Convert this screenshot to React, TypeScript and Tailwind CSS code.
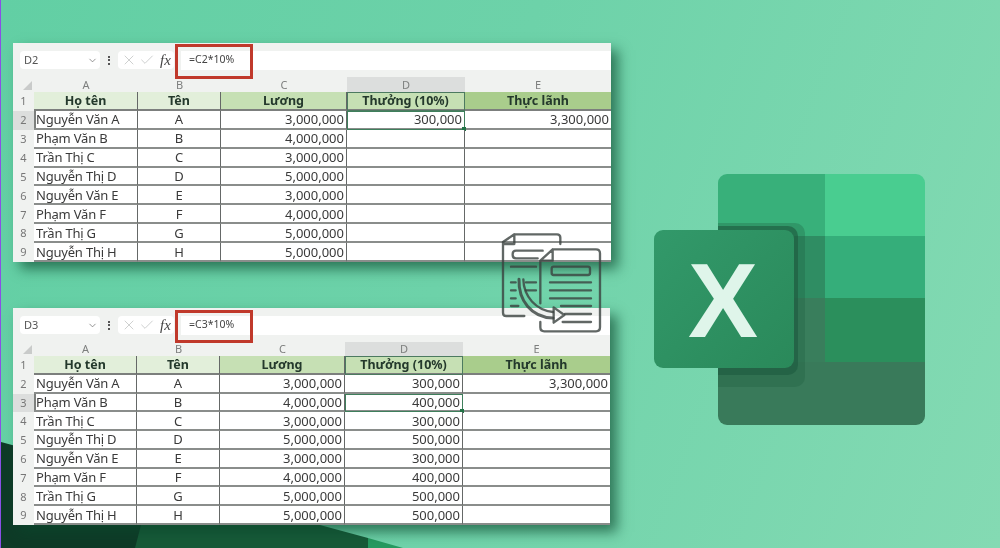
import { Check, ChevronDown, X } from 'lucide-react';

const font = { fontFamily: '"Noto Sans", "Open Sans", sans-serif' };

interface Person {
  hoTen: string;
  ten: string;
  luong: string;
}

const people: Person[] = [
  { hoTen: 'Nguyễn Văn A', ten: 'A', luong: '3,000,000' },
  { hoTen: 'Phạm Văn B', ten: 'B', luong: '4,000,000' },
  { hoTen: 'Trần Thị C', ten: 'C', luong: '3,000,000' },
  { hoTen: 'Nguyễn Thị D', ten: 'D', luong: '5,000,000' },
  { hoTen: 'Nguyễn Văn E', ten: 'E', luong: '3,000,000' },
  { hoTen: 'Phạm Văn F', ten: 'F', luong: '4,000,000' },
  { hoTen: 'Trần Thị G', ten: 'G', luong: '5,000,000' },
  { hoTen: 'Nguyễn Thị H', ten: 'H', luong: '5,000,000' },
];

const cell = 'border-b-2 border-b-[#8a8d8b] border-r border-r-[#656867] flex items-center pt-[1px] text-[13px] leading-none text-[#3a3a3a] whitespace-nowrap';
const head = 'border-b-2 border-b-[#7c7f7d] border-r border-r-[#656867] flex items-center justify-center pt-[1px] text-[12.5px] font-bold leading-none text-[#24392c]';
const colLetter = 'flex items-end justify-center text-[11px] leading-none pb-[2px] text-[#7d7f7e]';

interface SheetProps {
  nameBox: string;
  formula: string;
  activeRow: number;
  bonus: string[];
  cols: string;
  width: string;
  headerH: string;
  tableH: string;
  redBox: string;
}

function Sheet({ nameBox, formula, activeRow, bonus, cols, width, headerH, tableH, redBox }: SheetProps) {
  return (
    <div className={`relative ${width} bg-[#f0f2f0] shadow-[7px_7px_12px_rgba(10,70,45,0.65)] blur-[0.35px]`} style={font}>
      {/* thanh công thức */}
      <div className="flex items-center h-[34px] pl-[7px] pr-0">
        <div className="flex items-center justify-between w-[80px] h-[18px] bg-white rounded-sm pl-[4px] pr-[2px] text-[11px] text-[#555]">
          {nameBox}
          <ChevronDown size={11} strokeWidth={1.5} className="text-[#666]" />
        </div>
        <div className="flex flex-col gap-[1.5px] mx-[8px]">
          <span className="w-[2px] h-[2px] bg-[#555]" />
          <span className="w-[2px] h-[2px] bg-[#555]" />
          <span className="w-[2px] h-[2px] bg-[#555]" />
        </div>
        <div className="flex items-center w-[56px] h-[18px] bg-white rounded-sm pl-[3px] gap-[2px] text-[#bcbebd]">
          <X size={16} strokeWidth={1.1} />
          <Check size={16} strokeWidth={1.1} />
          <span className="ml-[3px] text-[15px] italic leading-none text-[#444] font-['Liberation_Serif',serif]">fx</span>
        </div>
        <div className="flex items-center flex-1 h-[19px] ml-[7px] bg-white pl-[8px] text-[10.5px] text-[#444]">{formula}</div>
      </div>

      {/* ô đỏ quanh công thức */}
      <div className={`absolute left-[162px] w-[78px] border-[3px] border-[#c0392b] ${redBox}`} />

      {/* tiêu đề cột */}
      <div className={`grid ${cols} ${headerH}`}>
        <div className="flex items-end justify-end pr-[2px] pb-[2px]">
          <div className="w-0 h-0 border-l-[9px] border-l-transparent border-b-[9px] border-b-[#c9cbca]" />
        </div>
        <div className={colLetter}>A</div>
        <div className={colLetter}>B</div>
        <div className={colLetter}>C</div>
        <div className={`${colLetter} bg-[#dcdedd]`}>D</div>
        <div className={colLetter}>E</div>
      </div>

      {/* bảng */}
      <div className={`grid ${cols} grid-rows-9 ${tableH}`}>
        <div className="flex items-center justify-center text-[11px] text-[#777]">1</div>
        <div className={`${head} bg-[#e2efda]`}>Họ tên</div>
        <div className={`${head} bg-[#e2efda]`}>Tên</div>
        <div className={`${head} bg-[#c6e0b4]`}>Lương</div>
        <div className={`${head} bg-[#c6e0b4] outline outline-[#4c7a60] -outline-offset-1`}>Thưởng (10%)</div>
        <div className={`${head} bg-[#a9cd8c] border-r-0`}>Thực lãnh</div>
        {people.map((p, i) => {
          const isActive = i + 2 === activeRow;
          return (
            <div key={p.ten} className="contents">
              <div className={`flex items-center justify-center text-[11px] text-[#777] ${isActive ? 'bg-[#dcdedd]' : ''}`}>{i + 2}</div>
              <div className={`${cell} bg-white pl-[2px] tracking-[-0.2px] ${isActive ? 'shadow-[inset_2px_0_0_#7c7f7d]' : ''}`}>{p.hoTen}</div>
              <div className={`${cell} bg-white justify-center`}>{p.ten}</div>
              <div className={`${cell} bg-white justify-end pr-[2px]`}>{p.luong}</div>
              <div className={`${cell} relative bg-white justify-end pr-[2px] ${isActive ? 'outline outline-[#3f7f5c] -outline-offset-1' : ''}`}>
                {bonus[i] ?? ''}
                {isActive && <span className="absolute -right-[2px] -bottom-[3px] w-[4px] h-[4px] bg-[#217346]" />}
              </div>
              <div className={`${cell} bg-white justify-end pr-[2px] border-r-0`}>{i === 0 ? '3,300,000' : ''}</div>
            </div>
          );
        })}
      </div>
    </div>
  );
}

function DocsIcon() {
  return (
    <svg className="absolute left-[480px] top-[220px] w-[140px] h-[130px]" viewBox="0 0 420 390" fill="none" stroke="#3a413e" strokeOpacity={0.8} strokeWidth={7} strokeLinecap="round" strokeLinejoin="round">
      <path d="M100 43H228Q238 43 238 53V72M100 43L66 66V278Q66 288 76 288H130M100 43V72H66" />
      <path d="M185 92H105Q95 92 95 102V105Q95 115 105 115H170" />
      <path d="M90 140H165M90 187H104M135 187H165M90 211H104M135 211H165M90 235H104M90 258H112" />
      <path d="M215 88H345Q357 88 357 100V322Q357 334 345 334H190Q178 334 178 322V306M178 122L215 88V122H178V250" />
      <rect x="212" y="140" width="115" height="25" rx="6" />
      <path d="M207 187H330M207 211H330M207 235H330M240 258H330M252 282H330M245 306H330" />
      <path d="M114 178C112 240 150 292 216 294" strokeWidth={9} />
      <path d="M127 178C128 230 165 270 216 276" strokeWidth={7} />
      <path d="M218 262L250 285L218 308Z" />
    </svg>
  );
}

function ExcelLogo() {
  return (
    <svg className="ml-[43px] mt-[131px] w-[271px] h-[251px] shrink-0" viewBox="654 174 271 251">
      <defs>
        <clipPath id="plate">
          <rect x="718" y="174" width="207" height="251" rx="9" />
        </clipPath>
        <linearGradient id="front" x1="0" y1="0" x2="1" y2="1">
          <stop offset="0" stopColor="#32996a" />
          <stop offset="1" stopColor="#2a895a" />
        </linearGradient>
      </defs>
      <g clipPath="url(#plate)">
        <rect x="718" y="174" width="107" height="62" fill="#38b07a" />
        <rect x="825" y="174" width="100" height="62" fill="#49cd90" />
        <rect x="718" y="236" width="107" height="62" fill="#2f8d63" />
        <rect x="825" y="236" width="100" height="62" fill="#35ae7a" />
        <rect x="718" y="298" width="107" height="64" fill="#397e5c" />
        <rect x="825" y="298" width="100" height="64" fill="#2b8f5c" />
        <rect x="718" y="362" width="207" height="63" fill="#397a5a" />
        <rect x="690" y="223" width="115" height="164" rx="10" fill="#1f5c40" fillOpacity={0.3} />
        <rect x="690" y="226" width="108" height="149" rx="10" fill="#1f5c40" fillOpacity={0.65} />
      </g>
      <rect x="654" y="230" width="140" height="138" rx="9" fill="url(#front)" />
      <text x="723" y="337" textAnchor="middle" fontFamily="'Liberation Sans', Arial, sans-serif" fontWeight="700" fontSize="105" fill="#dff5ea">
        X
      </text>
    </svg>
  );
}

export default function App() {
  return (
    <div className="relative h-[548px] w-full overflow-hidden border-l-[1px] border-l-[#8a4fe6] bg-[linear-gradient(110deg,#62cfa4_0%,#6dd2a9_45%,#84dab3_100%)]">
      {/* mảng xanh đậm góc dưới trái */}
      <svg className="absolute left-0 top-0 w-[1000px] h-[548px]" viewBox="0 0 1000 548">
        <polygon points="130,470 319,525 367,538 367,548 130,548" fill="#175a38" />
        <polygon points="367,538 402,548 367,548" fill="#259a60" />
        <polygon points="0,442 140,480 140,525 134,548 0,548" fill="#0e3b27" />
      </svg>

      <div className="relative flex pl-[12px] pt-[43px]">
        <div className="flex flex-col gap-[46px]">
          <Sheet
            nameBox="D2"
            formula="=C2*10%"
            activeRow={2}
            bonus={['300,000']}
            cols="grid-cols-[21px_104px_83px_126px_118px_146px]"
            width="w-[598px]"
            headerH="h-[15px]"
            tableH="h-[170px]"
            redBox="top-[1px] h-[35px]"
          />
          <Sheet
            nameBox="D3"
            formula="=C3*10%"
            activeRow={3}
            bonus={['300,000', '400,000', '300,000', '500,000', '300,000', '400,000', '500,000', '500,000']}
            cols="grid-cols-[21px_103px_83px_125px_118px_147px]"
            width="w-[597px]"
            headerH="h-[14px]"
            tableH="h-[169px]"
            redBox="top-[2px] h-[33px]"
          />
        </div>
        <ExcelLogo />
      </div>

      <DocsIcon />
    </div>
  );
}
